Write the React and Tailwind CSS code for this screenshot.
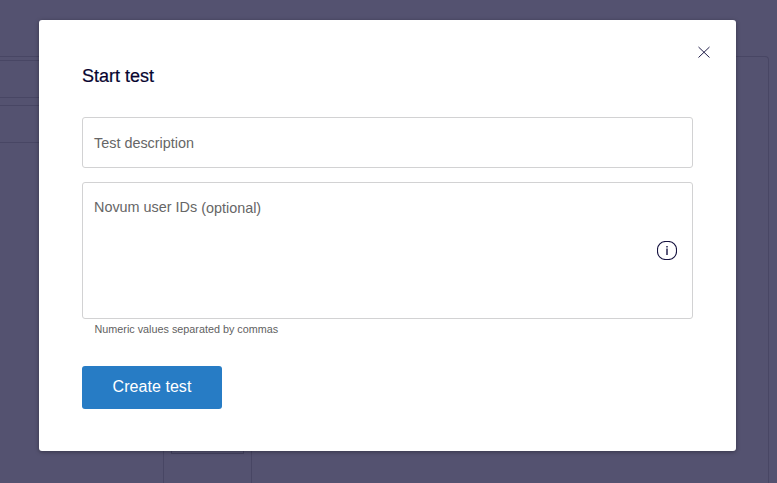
function Backdrop() {
  return (
    <div className="flex h-full w-[769px] flex-col pt-14">
      <div className="flex flex-1 flex-col justify-between rounded-tr-[4px] border-t border-r border-[#484664]">
        <div className="flex w-20 flex-col gap-[7px] pt-[3px]">
          <div className="h-[38px] border-y border-[#484664]" />
          <div className="h-[38px] border-y border-[#484664]" />
        </div>
        <div className="ml-[163px] h-[63px] w-[89px] border-x border-[#484664] px-[7px]">
          <div className="h-[34px] border border-[#434160]" />
        </div>
      </div>
    </div>
  );
}

function CloseIcon() {
  return (
    <svg width="12" height="12" viewBox="0 0 12 12" fill="none" stroke="#15123f" strokeWidth="0.95">
      <path d="M.5 1l11 10.5M11.5 1l-11 10.5" />
    </svg>
  );
}

function InfoIcon() {
  return (
    <svg width="20" height="19" viewBox="0 0 20 19" fill="none">
      <rect x=".5" y=".5" width="19" height="18" rx="8" stroke="#15123f" strokeWidth="1.1" />
      <path d="M10 7.5v6.5M10 5v1.5" stroke="#5b597a" strokeWidth="2" />
    </svg>
  );
}

export default function App() {
  return (
    <div className="relative h-[483px] w-[777px] overflow-hidden bg-[#545270] font-['Liberation_Sans',Arial,sans-serif]">
      <Backdrop />
      <section
        role="dialog"
        className="absolute top-5 left-[39px] flex h-[431px] w-[697px] flex-col rounded-[3px] bg-white px-[43px] shadow-[0_1px_4px_rgba(0,0,0,0.35)]"
      >
        <header className="flex h-[97px] justify-between">
          <h1 className="pt-[44px] text-[18px] leading-6 text-[#07042f] [-webkit-text-stroke:0.2px_#07042f]">Start test</h1>
          <button aria-label="Close" className="-mr-[17px] mt-[26px] h-3 w-3">
            <CloseIcon />
          </button>
        </header>
        <div className="flex h-[51px] w-[611px] items-center rounded-[3px] border border-[#d2d2d3] px-[11px] pt-0.5 text-[14.4px] text-[#666]">
          Test description
        </div>
        <div className="mt-[14px] flex h-[137px] w-[611px] items-center justify-between rounded-[3px] border border-[#d2d2d3] pr-[15px] pl-[11px] text-[14.4px] text-[#666]">
          <div className="flex gap-1 self-start pt-[14px] leading-5">
            <span>Novum user IDs</span>
            <span className="pt-px">(optional)</span>
          </div>
          <InfoIcon />
        </div>
        <p className="pt-[3px] pl-[12.5px] text-[10.8px] leading-[14px] text-[#5f5f5f]">Numeric values separated by commas</p>
        <button className="mt-[30px] h-[43px] w-[140px] rounded-[3px] bg-[#277cc5] pb-px text-[16px] tracking-[0.05px] text-white">
          Create test
        </button>
      </section>
    </div>
  );
}
